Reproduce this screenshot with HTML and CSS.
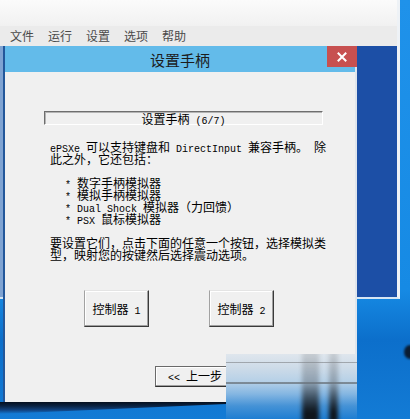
FILE: index.html
```html
<!DOCTYPE html>
<html lang="zh-CN">
<head>
<meta charset="utf-8">
<title>设置手柄</title>
<link rel="stylesheet" href="styles.css">
</head>
<body>
  <div class="main-window">
    <div class="caption"></div>
    <nav class="menubar">
      <span>文件</span><span>运行</span><span>设置</span><span>选项</span><span>帮助</span>
    </nav>
    <div class="client"></div>
  </div>

  <div class="corner-blot"></div>

  <section class="dialog">
    <header class="dlg-title">
      <span>设置手柄</span>
      <button class="close" aria-label="关闭">
        <svg width="10" height="10" viewBox="0 0 10 10"><path d="M1.5 1.5 L8.5 8.5 M8.5 1.5 L1.5 8.5" stroke="#fff" stroke-width="2" stroke-linecap="square"/></svg>
      </button>
    </header>
    <div class="dlg-body">
      <div class="step">设置手柄<span class="lat"> (6/7)</span></div>
      <div class="text">
        <p><span class="ln"><span class="lat">ePSXe </span>可以支持键盘和<span class="lat"> DirectInput </span>兼容手柄。<span class="lat"> </span>除</span><span class="ln">此之外，它还包括：</span></p>
        <ul class="features">
          <li class="ln"><span class="lat">* </span>数字手柄模拟器</li>
          <li class="ln"><span class="lat">* </span>模拟手柄模拟器</li>
          <li class="ln"><span class="lat">* Dual Shock </span>模拟器（力回馈）</li>
          <li class="ln"><span class="lat">* PSX </span>鼠标模拟器</li>
        </ul>
        <p><span class="ln">要设置它们，点击下面的任意一个按钮，选择模拟类</span><span class="ln">型，映射您的按键然后选择震动选项。</span></p>
      </div>
      <div class="pads">
        <button class="btn pad">控制器<span class="lat"> 1</span></button>
        <button class="btn pad">控制器<span class="lat"> 2</span></button>
      </div>
      <div class="nav">
        <button class="btn back"><span class="lat">&lt;&lt; </span>上一步</button>
      </div>
    </div>
  </section>

  <div class="dock-shadow"></div>

  <div class="watermark">
    <i class="bar bar-a"></i>
    <i class="bar bar-b"></i>
  </div>
</body>
</html>
```
FILE: styles.css
```css
html, body {
  margin: 0;
  padding: 0;
}

body {
  width: 410px;
  height: 419px;
  overflow: hidden;
  position: relative;
  font-family: "Noto Sans CJK SC", sans-serif;
  background: linear-gradient(to bottom, #1f92ea 0, #168ae4 290px, #0c6fcb 340px, #137bd5 419px);
}

/* latin runs use the narrow fixed-width dialog font */
.lat {
  font-family: "Liberation Mono", monospace;
  font-size: 10px;
  line-height: 0;
  white-space: pre;
}

/* emulator main window behind the dialog */
.main-window {
  position: absolute;
  left: 0;
  top: 0;
  width: 400px;
  height: 299px;
  box-sizing: border-box;
  display: flex;
  flex-direction: column;
  border-right: 3px solid #eef2f6;
  border-bottom: 2px solid #d5e5f3;
}

.caption {
  height: 26px;
  background: linear-gradient(to bottom, #fbfbfb, #f1f1f1);
}

.menubar {
  height: 20px;
  display: flex;
  align-items: center;
  gap: 14px;
  padding-left: 10px;
  background: #ebebeb;
  font-size: 12px;
  line-height: 20px;
  color: #4a4a4a;
}

.client {
  flex: 1;
  background: #1c4fa6;
  border-left: 3px solid #7fa3d2;
}

/* desktop decorations */
.dock-shadow {
  position: absolute;
  left: 0;
  top: 402px;
  width: 232px;
  height: 12px;
  background: linear-gradient(to bottom, #050f1e 0, #0a2343 4px, #11427f 8px, rgba(20, 100, 190, 0) 12px);
  clip-path: polygon(0 0, 100% 0, 100% 15%, 0 100%);
}

.corner-blot {
  position: absolute;
  left: 404px;
  top: 345px;
  width: 12px;
  height: 14px;
  border-radius: 50%;
  background: #0b1d33;
  filter: blur(1px);
}

/* setup dialog */
.dialog {
  position: absolute;
  left: 3px;
  top: 46px;
  width: 354px;
  height: 356px;
  box-sizing: border-box;
  display: flex;
  flex-direction: column;
  border-left: 2px solid #23579a;
  border-right: 2px solid #dfe5ec;
}

.dlg-title {
  position: relative;
  height: 26px;
  flex: none;
  display: flex;
  align-items: center;
  justify-content: center;
  background: #63bbea;
  font-size: 15px;
  color: #1c1c1c;
}

.close {
  position: absolute;
  right: -2px;
  top: 0;
  width: 30px;
  height: 21px;
  padding: 0;
  border: 0;
  background: #c75050;
  display: flex;
  align-items: center;
  justify-content: center;
}

.dlg-body {
  flex: 1;
  background: #f0f0f0;
  padding: 39px 0 0 39px;
  display: flex;
  flex-direction: column;
  align-items: flex-start;
  color: #000;
}

.step {
  width: 279px;
  height: 14px;
  box-sizing: border-box;
  border-style: solid;
  border-width: 1px;
  border-color: #6e6e6e #ffffff #ffffff #6e6e6e;
  box-shadow: inset 1px 1px #b4b4b4;
  font-size: 12px;
  line-height: 13px;
  text-align: center;
  white-space: nowrap;
}

.text {
  margin: 16px 0 0 6px;
  font-size: 12px;
  line-height: 12px;
  white-space: nowrap;
}

.text p {
  margin: 0;
}

/* every text row is one 12px line */
.ln {
  display: block;
  height: 12px;
  line-height: 12px;
}

.features {
  list-style: none;
  margin: 12px 0;
  padding: 0 0 0 15px;
}

.pads {
  margin: 29px 0 0 40px;
  display: flex;
  gap: 60px;
}

.btn {
  box-sizing: border-box;
  padding: 0;
  background: #f0f0f0;
  color: #000;
  font-family: "Noto Sans CJK SC", sans-serif;
  font-size: 12px;
  line-height: 12px;
  border: 1px solid;
  white-space: nowrap;
}

.pad {
  width: 65px;
  height: 37px;
  border-color: #e4e4e4 #3a3a3a #3a3a3a #a2a2a2;
  box-shadow: inset -1px -1px #a0a0a0, inset 1px 1px #ffffff;
}

.nav {
  margin: 35px 0 0 111px;
}

.back {
  width: 80px;
  height: 21px;
  border-color: #6a6a6a #303030 #303030 #6a6a6a;
  box-shadow: inset -1px -1px #a0a0a0, inset 1px 1px #ffffff;
}

/* soft overlay in the lower-right corner */
.watermark {
  position: absolute;
  left: 226px;
  top: 354px;
  width: 131px;
  height: 65px;
  overflow: hidden;
  background:
    linear-gradient(to bottom, transparent 8px, rgba(80, 80, 80, 0.4) 8px, rgba(80, 80, 80, 0.4) 9px, transparent 9px, transparent 28px, rgba(70, 70, 70, 0.5) 28px, rgba(70, 70, 70, 0.5) 30px, transparent 30px),
    linear-gradient(to bottom, #dfe6ed 0, #cddbe8 14px, #b5d0e7 28px, #84b6e2 40px, #4592d6 52px, #1e7ed2 65px);
}

.bar {
  position: absolute;
  top: -4px;
  bottom: -4px;
  filter: blur(2px);
  background: linear-gradient(to bottom, rgba(150, 150, 150, 0.25), rgba(110, 120, 130, 0.55) 45%, #10161c 85%);
}

.bar-a {
  left: 76px;
  width: 17px;
}

.bar-b {
  left: 103px;
  width: 9px;
}
```
